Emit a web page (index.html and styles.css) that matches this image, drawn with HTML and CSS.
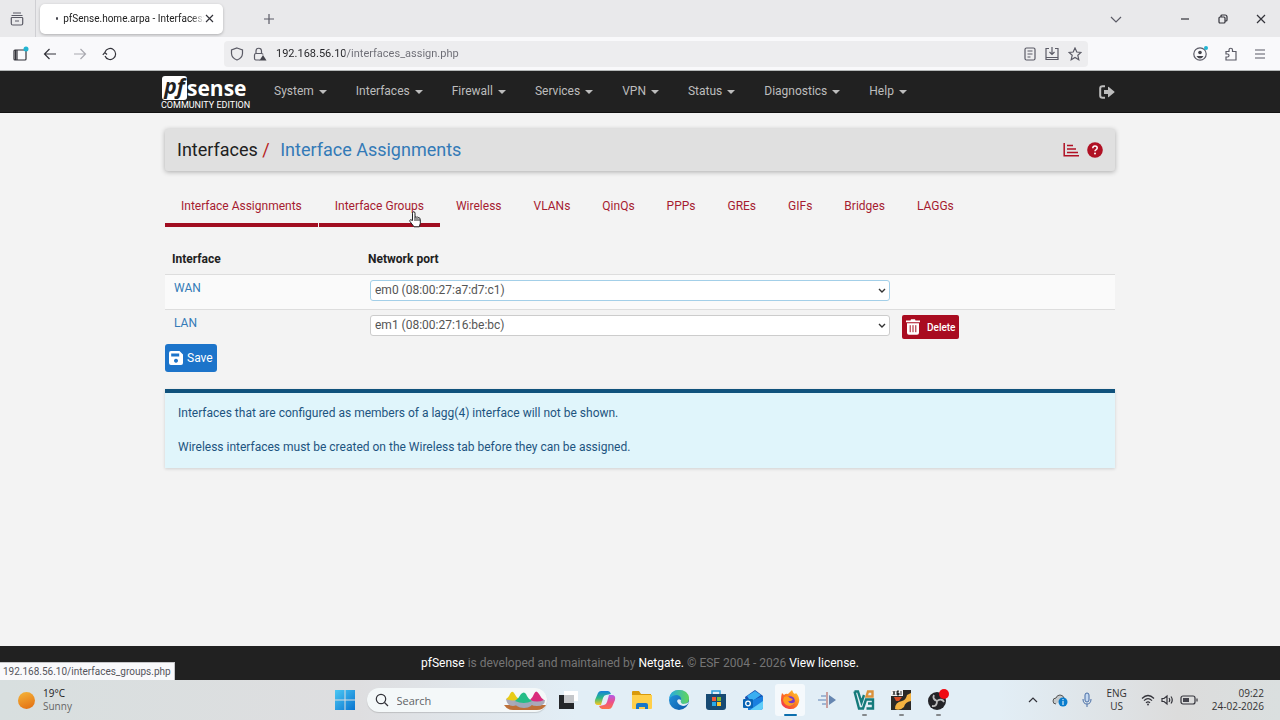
FILE: index.html
```html
<!DOCTYPE html>
<html lang="en">
<head>
  <meta charset="UTF-8" />
  <meta name="viewport" content="width=device-width, initial-scale=1.0"/>
  <title>pfSense.home.arpa - Interfaces: Interface Assignments</title>
  <link rel="stylesheet" href="styles.css">
</head>
<body>
  <!-- Browser window -->
  <div class="tab-strip">
    <button class="view-btn" aria-label="Recent browsing">
      <svg class="line" width="14" height="14" viewBox="0 0 14 14"><path d="M3 1h8M1.500 3.500h11M2 5.500h10q.7 0 .7.700v5.300q0 1.500-1.500 1.500H2.800q-1.500 0-1.500-1.500V6.200q0-.7.700-.7zM5 9h4"/></svg>
    </button>
    <div class="browser-tab">
      <span class="loading-dot"></span>
      <span class="tab-title">pfSense.home.arpa - Interfaces:</span>
      <button aria-label="Close tab"><svg class="line dark" width="9" height="9" viewBox="0 0 9 9"><path d="M1 1l7 7M8 1L1 8"/></svg></button>
    </div>
    <button class="new-tab" aria-label="New tab"><svg class="line" width="12" height="12" viewBox="0 0 12 12"><path d="M6 1v10M1 6h10"/></svg></button>
    <div class="window-controls">
      <button class="list-tabs" aria-label="List tabs"><svg class="line" width="12" height="12" viewBox="0 0 12 12"><path d="M1 4l5 5 5-5"/></svg></button>
      <button aria-label="Minimize"><svg class="line dark" width="10" height="10" viewBox="0 0 10 10"><path d="M1 5h8"/></svg></button>
      <button aria-label="Restore"><svg class="line dark" width="10" height="10" viewBox="0 0 10 10"><rect x="1" y="3" width="6" height="6" rx="1"/><path d="M3 3V2q0-1 1-1h3q2 0 2 2v3q0 1-1 1H7"/></svg></button>
      <button aria-label="Close"><svg class="line dark" width="10" height="10" viewBox="0 0 10 10"><path d="M1 1l8 8M9 1L1 9"/></svg></button>
    </div>
  </div>

  <div class="toolbar">
    <div class="nav-buttons">
      <button aria-label="Sidebar"><svg class="line dark" width="18" height="16" viewBox="0 0 18 16"><rect x="3" y="4" width="12" height="10" rx="1"/><path d="M6 4v10M4.500 4v10"/><circle class="notice" cx="15" cy="3" r="2.500"/></svg></button>
      <button aria-label="Back"><svg class="line dark" width="14" height="14" viewBox="0 0 14 14"><path d="M13 7H1.500M6.500 2l-5 5 5 5"/></svg></button>
      <button aria-label="Forward" disabled><svg class="line" width="14" height="14" viewBox="0 0 14 14"><path d="M1 7h11.500M7.500 2l5 5-5 5"/></svg></button>
      <button aria-label="Reload"><svg class="line dark" width="16" height="14" viewBox="0 0 16 14"><path d="M3 9a5.500 5.500 0 1 0 0-4M.8 7.800L2.800 5.500l2.200 2"/></svg></button>
    </div>
    <div class="url-bar">
      <svg class="line" width="14" height="14" viewBox="0 0 14 14"><path d="M7 1l5.500 2v3.500Q12.300 11 7 13 1.700 11 1.500 6.500V3z"/></svg>
      <svg class="line" width="14" height="14" viewBox="0 0 14 14"><path d="M7 13H3q-1.500 0-1.500-1.500V8Q1.500 6.500 3 6.500h5.500q1.500 0 1.500 1M3 6.500V4a2.700 2.700 0 0 1 5.500 0v2.500"/><path class="solid" d="M10 8l3.500 5.500h-7z"/></svg>
      <input type="text" class="address" aria-label="Address" value="192.168.56.10/interfaces_assign.php">
      <svg class="line" width="12" height="14" viewBox="0 0 12 14"><rect x="1" y="1" width="10" height="12" rx="1.500"/><path d="M3.500 4h5M3.500 7h5M3.500 10h3"/></svg>
      <svg class="line" width="14" height="14" viewBox="0 0 14 14"><path d="M4 1.500H1v11h12v-11h-3M1 10.500h12M7 0v7.500M4.500 5L7 7.500 9.500 5"/></svg>
      <svg class="line" width="14" height="14" viewBox="0 0 14 14"><path d="M7 1l1.800 4 4.200.4-3.200 2.900 1 4.400L7 10.500l-3.800 2.200 1-4.400L1 5.400 5.200 5z"/></svg>
    </div>
    <div class="tool-buttons">
      <button aria-label="Account"><svg class="line" width="16" height="18" viewBox="0 0 16 18"><circle cx="8" cy="9" r="6.200"/><circle class="solid" cx="8" cy="7.500" r="1.800"/><path class="solid" d="M4.500 11h7Q10 13.500 8 13.500 6 13.500 4.500 11z"/><circle class="notice" cx="14" cy="3" r="2"/></svg></button>
      <button aria-label="Extensions"><svg class="line" width="14" height="14" viewBox="0 0 14 14"><path d="M2 4.500h3V3a1.700 1.700 0 0 1 3.500 0v1.500H12V13H2v-3h1.500a1.500 1.500 0 0 0 0-3H2z"/></svg></button>
      <button aria-label="Menu"><svg class="line" width="12" height="12" viewBox="0 0 12 12"><path d="M1 2h10M1 6h10M1 10h10"/></svg></button>
    </div>
  </div>

  <!-- pfSense page -->
  <div class="page">
    <nav class="navbar">
      <div class="container navbar-inner">
        <a href="#" class="brand">
          <span class="logo"><span class="logo-pf">pf</span><span class="logo-sense">sense</span></span>
          <span class="edition">COMMUNITY EDITION</span>
        </a>
        <ul class="menu">
          <li><a href="#">System</a></li>
          <li><a href="#">Interfaces</a></li>
          <li><a href="#">Firewall</a></li>
          <li><a href="#">Services</a></li>
          <li><a href="#">VPN</a></li>
          <li><a href="#">Status</a></li>
          <li><a href="#">Diagnostics</a></li>
          <li><a href="#">Help</a></li>
        </ul>
        <a href="#" class="logout" aria-label="Logout"><svg width="16" height="14" viewBox="0 0 16 14"><path d="M6 1.200H3.500Q1.200 1.200 1.200 3.500v7q0 2.300 2.300 2.300H6" fill="none" stroke="currentColor" stroke-width="2"/><path d="M5 5h4V2.200q0-.9.800-.3l5.500 4.500q.6.600 0 1.200l-5.500 4.500q-.8.600-.8-.3V9H5z" fill="currentColor"/></svg></a>
      </div>
    </nav>

    <main class="container">
      <header class="page-header">
        <h1>Interfaces <span class="slash">/</span> <a href="#">Interface Assignments</a></h1>
        <div class="header-icons">
          <a href="#" aria-label="Related status"><svg width="16" height="14" viewBox="0 0 16 14" fill="none" stroke="currentColor"><path stroke-width="1.500" d="M1.200 0v12.800H16"/><path stroke-width="1.500" d="M4 2.500h6M4 6h9M4 9.500h11"/></svg></a>
          <a href="#" aria-label="Help"><svg width="16" height="16" viewBox="0 0 16 16"><circle cx="8" cy="8" r="7.800" fill="currentColor"/><path d="M5.800 6.300q0-2.200 2.200-2.200t2.200 1.900q0 1.100-1.100 1.700Q8 8.200 8 9.200" fill="none" stroke="#fff" stroke-width="1.500"/><circle cx="8" cy="11.600" r="1" fill="#fff"/></svg></a>
        </div>
      </header>

      <ul class="tabs">
        <li class="active"><a href="#">Interface Assignments</a></li>
        <li class="active"><a href="#">Interface Groups</a>
          <svg class="pointer" width="13" height="17" viewBox="0 0 13 17"><path d="M3.500 9.500V2.200q0-1.500 1.200-1.500T6 2.200v4q.7-.8 1.600 0 .9-.5 1.600.4 1.200-.5 1.600.7l.5 1.500v3.500l-1 3.500H5L1 10.500Q.3 9 1.600 8.700z" fill="#fff" stroke="#222"/><path d="M6 6v4M8 7v3M10 7.500V10" stroke="#222"/></svg>
        </li>
        <li><a href="#">Wireless</a></li>
        <li><a href="#">VLANs</a></li>
        <li><a href="#">QinQs</a></li>
        <li><a href="#">PPPs</a></li>
        <li><a href="#">GREs</a></li>
        <li><a href="#">GIFs</a></li>
        <li><a href="#">Bridges</a></li>
        <li><a href="#">LAGGs</a></li>
      </ul>

      <form>
        <table class="assignments">
          <thead>
            <tr><th class="col-name">Interface</th><th class="col-port">Network port</th><th></th></tr>
          </thead>
          <tbody>
            <tr>
              <td><a href="#">WAN</a></td>
              <td class="port">
                <div class="select-box focused">
                  <select aria-label="WAN network port"><option>em0 (08:00:27:a7:d7:c1)</option></select>
                  <svg class="chevron" width="8" height="6" viewBox="0 0 8 6"><path d="M1 1l3 3 3-3"/></svg>
                </div>
              </td>
              <td></td>
            </tr>
            <tr>
              <td><a href="#">LAN</a></td>
              <td class="port">
                <div class="select-box">
                  <select aria-label="LAN network port"><option>em1 (08:00:27:16:be:bc)</option></select>
                  <svg class="chevron" width="8" height="6" viewBox="0 0 8 6"><path d="M1 1l3 3 3-3"/></svg>
                </div>
              </td>
              <td>
                <button type="button" class="btn btn-danger">
                  <svg width="14" height="16" viewBox="0 0 14 16"><path d="M0 1.500h4.500L5 .3h4l.5 1.200H14v1.800H0zM1 4.300h12v9.500q0 1.900-1.900 1.900H2.900Q1 15.700 1 13.800z" fill="#fff"/><path d="M4.200 6.200v7M7 6.200v7M9.800 6.200v7" stroke="#a61322"/></svg>
                  Delete
                </button>
              </td>
            </tr>
          </tbody>
        </table>
        <button type="button" class="btn btn-save">
          <svg width="14" height="14" viewBox="0 0 14 14"><path fill="#fff" fill-rule="evenodd" d="M2 0h8.500L14 3.500V12q0 2-2 2H2q-2 0-2-2V2q0-2 2-2zM2.200 2.500v3h8v-3zM7 7.800a2 2 0 1 0 .01 0z"/></svg>
          Save
        </button>
      </form>

      <div class="alert">
        <p>Interfaces that are configured as members of a lagg(4) interface will not be shown.</p>
        <p>Wireless interfaces must be created on the Wireless tab before they can be assigned.</p>
      </div>
    </main>

    <footer class="footer">
      <a href="#">pfSense</a> is developed and maintained by <a href="#">Netgate.</a> © ESF 2004 - 2026 <a href="#">View license.</a>
    </footer>
    <div class="link-status">192.168.56.10/interfaces_groups.php</div>
  </div>

  <!-- Windows taskbar -->
  <div class="taskbar">
    <div class="weather">
      <span class="sun"></span>
      <div>19°C<br><span class="muted">Sunny</span></div>
    </div>

    <div class="apps">
      <svg width="22" height="22" viewBox="0 0 22 22">
        <defs><linearGradient id="win" x2="1" y2="1"><stop offset="0" stop-color="#4cc8f4"/><stop offset="1" stop-color="#0873cf"/></linearGradient></defs>
        <path fill="url(#win)" d="M1 1h9.500v9.500H1zM11.500 1H21v9.500h-9.500zM1 11.500h9.500V21H1zM11.500 11.500H21V21h-9.500z"/>
      </svg>
      <label class="search">
        <svg class="line dark" width="14" height="14" viewBox="0 0 14 14"><circle cx="6" cy="6" r="4.700"/><path d="M9.500 9.500L13 13"/></svg>
        <input type="text" placeholder="Search" aria-label="Search">
        <svg width="44" height="22" viewBox="0 0 44 22">
          <path fill="#bd7038" d="M1 16h42q-3 5-9 5H10q-6 0-9-5z"/>
          <path fill="#aaa9b8" d="M3 10h13q0 7-6 7t-7-7zM26 11h16q0 6-8 6t-8-6z"/>
          <path fill="#e8cc18" d="M3 10q3-2 4-5 2-4 4-1 2 4 5 6-6 3-13 0z"/>
          <path fill="#d92c7c" d="M27 11q3-3 4-6 2-5 5 0 2 4 5 6-7 3-14 0z"/>
          <path fill="#9fa8ba" d="M11 12h19q0 7-9 7t-10-7z"/>
          <path fill="#25bd87" d="M12 12q4-3 6-7 3-3 5 0 2 5 6 7-8 4-17 0z"/>
        </svg>
      </label>
      <svg width="22" height="22" viewBox="0 0 22 22"><path fill="#242629" d="M2 6h15v14H2z"/><path fill="#fff" d="M7 2h14v10h-4V6H7z"/><path fill="#c5c7ca" d="M7 6h10v8H7z"/></svg>
      <svg width="22" height="22" viewBox="0 0 22 22">
        <defs><linearGradient id="cpa" x2="0" y2="1"><stop offset="0" stop-color="#1580dc"/><stop offset=".5" stop-color="#2cbb85"/><stop offset="1" stop-color="#ffc61c"/></linearGradient><linearGradient id="cpb" x2="0" y2="1"><stop offset="0" stop-color="#b35be8"/><stop offset=".5" stop-color="#ec4f8b"/><stop offset="1" stop-color="#fb7446"/></linearGradient></defs>
        <path fill="url(#cpa)" d="M7 2h7q2 0 3 3l-5 1q-2 0-3 3l-2 7H4q-4 0-3-5l3-7q1-2 3-2z"/>
        <path fill="url(#cpb)" d="M15 20H8q-2 0-3-3l5-1q2 0 3-3l2-7h3q4 0 3 5l-3 7q-1 2-3 2z"/>
      </svg>
      <svg width="22" height="22" viewBox="0 0 22 22"><path fill="#d99a0c" d="M1 3q0-1 1-1h6l2 3h10v4H1z"/><path fill="#ffcf4a" d="M1 6h20v13q0 1-1 1H2q-1 0-1-1z"/><path fill="#1976c8" d="M5 20v-4q0-2 2-2h8q2 0 2 2v4h-3v-2H8v2z"/></svg>
      <svg width="22" height="22" viewBox="0 0 22 22">
        <defs><linearGradient id="edge" x2="1" y2="1"><stop offset="0" stop-color="#2499e0"/><stop offset="1" stop-color="#0b55a5"/></linearGradient><linearGradient id="edge2"><stop offset="0" stop-color="#24a9e6"/><stop offset="1" stop-color="#62d659"/></linearGradient></defs>
        <circle cx="11" cy="11" r="10" fill="url(#edge)"/>
        <path fill="url(#edge2)" d="M1 10Q2 1 11 1t10 8q0 6-6 6-4 0-2-3 1-5-4-6-5 0-8 4z"/>
        <path fill="#e2edf5" d="M13 11q-1 3 2 4 3 0 6-2-2 4-6 4-5-1-6-5 1-3 4-1z"/>
      </svg>
      <svg width="22" height="22" viewBox="0 0 22 22"><path fill="none" stroke="#2b9fda" stroke-width="1.500" d="M7 5V2h8v3"/><path fill="#174a73" d="M1 5h20v13q0 3-3 3H4q-3 0-3-3z"/><path fill="#f15b35" d="M7 8h4v4H7z"/><path fill="#80bd32" d="M12 8h4v4h-4z"/><path fill="#28a9e8" d="M7 13h4v4H7z"/><path fill="#fdc52c" d="M12 13h4v4h-4z"/></svg>
      <svg width="22" height="22" viewBox="0 0 22 22"><path fill="#174fae" d="M3 8l10-7 8 6v12H5z"/><path fill="#39aef1" d="M5 7l8-5 6 4-10 7z"/><path fill="#197fe0" d="M6 13l15-6v11q0 3-3 3H6z"/><path fill="#5fcdf9" d="M8 21l13-9v6q0 3-3 3z"/><rect x="1" y="10" width="10" height="9" rx="1" fill="#0964b5"/><circle cx="6" cy="14.500" r="2.300" fill="none" stroke="#fff" stroke-width="1.300"/></svg>
      <div class="app current">
        <svg width="22" height="22" viewBox="0 0 22 22">
          <defs><linearGradient id="fox" x1="1" x2="0" y2="1"><stop offset="0" stop-color="#ffdd35"/><stop offset=".5" stop-color="#ff761e"/><stop offset="1" stop-color="#ed2458"/></linearGradient></defs>
          <path fill="url(#fox)" d="M3 4l2 2q2-2 4-1 2-2 4-4 1 3 3 4l1-1q4 4 3 9-2 8-10 7-8-1-8-9 0-4 1-7z"/>
          <circle cx="11" cy="12" r="4.800" fill="#7738c8"/><path fill="#ff9d20" d="M5 8q4-2 6 1l3 1q-2 3-5 2 2 4 7 1-2 4-6 4-5-1-6-6z"/>
        </svg>
      </div>
      <svg width="22" height="22" viewBox="0 0 22 22"><path fill="#6686b1" d="M13 6l7 5-7 5z"/><path stroke="#9fb7d5" stroke-width="2" d="M5 7h5M2 11h8M6 15h4"/><path fill="#c8a0a0" d="M10 3h2v16h-2z"/></svg>
      <div class="app">
        <svg width="22" height="22" viewBox="0 0 22 22" fill="none" stroke-width="2.400"><path stroke="#157b7b" d="M1.500 2.500H5l3.500 11L11 6M1.500 2.500L6 19.500h4l3-9h7v4h-5M20 14.500v5h-6.500"/><path stroke="#db913a" d="M13.500 7.500L15 2.500h4.500v5z"/></svg>
      </div>
      <div class="app">
        <svg width="22" height="22" viewBox="0 0 22 22"><path fill="#2b2927" d="M1 1h20v20H1z"/><path fill="#f4b240" d="M5 20q0-7 7-8 4-1 5-6l4-2v8q-6 1-7 6-4 4-9 2z"/><path fill="#f3f3f3" d="M1 1h12v6H1z"/><path stroke="#333" d="M3 2l2 4M5 2L3 6M9 2H7v4h2V4H7M11 2v4"/><path fill="#d84b24" d="M4 8h8l-3 4H6z"/></svg>
      </div>
      <div class="app">
        <svg width="22" height="22" viewBox="0 0 22 22"><circle cx="10" cy="12" r="9" fill="#242428"/><path d="M10 12q-5-2-3-6M10 12q5-3 7 1M10 12q0 6-5 5" fill="none" stroke="#bbb" stroke-width="1.800"/><circle cx="17" cy="5" r="5" fill="#f00b12"/></svg>
      </div>
    </div>

    <div class="tray">
      <svg class="line dark" width="10" height="10" viewBox="0 0 10 10"><path d="M1 7l4-4 4 4"/></svg>
      <svg width="16" height="14" viewBox="0 0 16 14"><path fill="#c4c8ca" stroke="#555" d="M4 11Q1 11 1 8t3-3q1-3 4-3t4 3"/><circle cx="11" cy="9" r="4.500" fill="#087ccd"/><path stroke="#fff" d="M11 6v1.200M11 8v4"/></svg>
      <svg width="10" height="16" viewBox="0 0 10 16" fill="none" stroke="#466da6"><rect x="3" y="1" width="4" height="9" rx="2" fill="#c4d8f0"/><path d="M1 7q0 5 4 5t4-5M5 12v3"/></svg>
      <div class="lang">ENG<br>US</div>
      <div class="status-icons">
        <svg class="line dark" width="14" height="12" viewBox="0 0 14 12"><path d="M1 4.500q6-6 12 0M3 6.700q4-4 8 0M5 8.800q2-2 4 0"/><circle class="solid" cx="7" cy="10.500" r="1"/></svg>
        <svg class="line dark" width="13" height="12" viewBox="0 0 13 12"><path d="M1 4.500h2L6 2v8L3 7.500H1zM8 4q1.500 2 0 4M10 2.500q2.500 3.500 0 7"/></svg>
        <svg class="line dark" width="18" height="10" viewBox="0 0 18 10"><rect x="1" y="1" width="14" height="8" rx="2"/><path class="solid" d="M3 3h6v4H3z"/><path d="M17 3.500v3"/></svg>
      </div>
      <div class="clock">09:22<br>24-02-2026</div>
    </div>
  </div>
</body>
</html>
```
FILE: styles.css
```css
* {
  box-sizing: border-box;
}

body {
  margin: 0;
  min-height: 100vh;
  display: flex;
  flex-direction: column;
  font-family: Roboto, sans-serif;
  font-size: 12px;
  line-height: 17px;
  color: #212121;
  background: #f3f3f3;
}

a {
  color: #337ab7;
  text-decoration: none;
}

button, input, select {
  font: inherit;
  color: inherit;
}

button {
  display: inline-flex;
  align-items: center;
  border: none;
  background: none;
  padding: 0;
  cursor: pointer;
}

ul {
  list-style: none;
  margin: 0;
  padding: 0;
}

svg {
  display: block;
  flex-shrink: 0;
}

.line {
  fill: none;
  stroke: #5b5b66;
  stroke-width: 1.2;
}

.line.dark {
  stroke: #33333a;
}

.line .solid {
  fill: #44444c;
  stroke: none;
}

.line .notice {
  fill: #22b5d2;
  stroke: none;
}

/* browser */
.tab-strip {
  display: flex;
  align-items: center;
  height: 37px;
  background: #e9e9eb;
  font-size: 10px;
}

.view-btn {
  width: 36px;
  height: 37px;
  padding-right: 2px;
  justify-content: center;
  border-right: 1px solid #cfcfd3;
}

.browser-tab {
  display: flex;
  align-items: center;
  width: 183px;
  height: 30px;
  margin-left: 4px;
  padding: 0 9px 0 16px;
  border-radius: 5px;
  background: #fff;
  box-shadow: 0 1px 3px rgba(0, 0, 0, 0.25);
}

.loading-dot {
  width: 3px;
  height: 3px;
  margin-right: 5px;
  border-radius: 50%;
  background: #44444c;
}

.tab-title {
  flex: 1;
  white-space: nowrap;
  mask-image: linear-gradient(to left, transparent, #000 14px);
}

.new-tab {
  margin-left: 40px;
}

.window-controls {
  display: flex;
  gap: 28px;
  margin-left: auto;
  padding-right: 14px;
}

.list-tabs {
  margin-right: 30px;
}

.toolbar {
  display: flex;
  align-items: center;
  height: 34px;
  background: #f9f9fb;
  border-bottom: 1px solid #b5b8b8;
}

.nav-buttons {
  display: flex;
  width: 224px;
  padding-left: 5px;
}

.nav-buttons button {
  width: 30px;
  justify-content: center;
}

.nav-buttons button:disabled {
  opacity: 0.5;
}

.url-bar {
  flex: 1;
  display: flex;
  align-items: center;
  gap: 9px;
  height: 26px;
  padding: 0 6px;
  border-radius: 4px;
  background: #ededef;
}

.address {
  flex: 1;
  min-width: 0;
  border: none;
  padding: 0;
  outline: none;
  font-size: 11px;
  /* host is darker than the path */
  color: transparent;
  background: linear-gradient(to right, #222226 69px, #6c6c74 69px);
  background-clip: text;
}

.tool-buttons {
  display: flex;
  justify-content: flex-end;
  align-items: center;
  gap: 16px;
  width: 192px;
  padding-right: 14px;
}

/* page */
.page {
  position: relative;
  flex: 1;
  display: flex;
  flex-direction: column;
}

.container {
  width: 100%;
  max-width: 950px;
  margin: 0 auto;
}

.navbar {
  background: #212121;
  border-bottom: 1px solid #111;
}

.navbar-inner {
  display: flex;
  align-items: center;
  height: 41px;
}

.brand {
  display: flex;
  flex-direction: column;
  width: 88px;
  margin-left: -4px;
  padding-top: 3px;
  color: #fff;
}

.logo {
  display: flex;
  align-items: center;
  height: 24px;
  font-family: "Open Sans", sans-serif;
  font-size: 21px;
  font-weight: 700;
}

.logo-pf {
  width: 25px;
  height: 24px;
  margin-left: 1px;
  border-radius: 3px;
  background: #fff;
  color: #212121;
  font-style: italic;
  line-height: 20px;
  text-align: center;
}

.logo-sense {
  line-height: 20px;
}

.edition {
  font-size: 9px;
  line-height: 10px;
  white-space: nowrap;
}

.menu {
  display: flex;
  gap: 29px;
  margin-left: 25px;
}

.menu a {
  display: flex;
  align-items: center;
  color: #bdbdbd;
}

.menu a::after {
  content: "";
  margin-left: 5px;
  border: 4px solid transparent;
  border-top-color: #bdbdbd;
  border-bottom: none;
}

.logout {
  margin-left: auto;
  color: #bdbdbd;
}

.page-header {
  display: flex;
  align-items: center;
  justify-content: space-between;
  height: 42px;
  margin: 16px 0 19px;
  padding: 0 12px;
  border-radius: 3px;
  background: #e0e0e0;
  box-shadow: 0 1px 5px rgba(0, 0, 0, 0.3);
}

h1 {
  margin: 0;
  font-size: 18px;
  font-weight: 400;
  line-height: 24px;
}

h1 a {
  margin-left: 6px;
}

.slash {
  color: #b71c1c;
}

.header-icons {
  display: flex;
  align-items: center;
  gap: 8px;
}

.header-icons a {
  color: #b01124;
}

.tabs {
  display: flex;
}

.tabs li {
  position: relative;
  border-bottom: 4px solid transparent;
}

.tabs li.active {
  border-bottom-color: #a00d20;
}

.tabs .active + .active {
  margin-left: 1px;
}

.tabs a {
  display: block;
  padding: 8px 16px;
  color: #a61b30;
}

.pointer {
  position: absolute;
  top: 21px;
  right: 18px;
}

.assignments {
  width: 100%;
  margin-top: 18px;
  border-collapse: separate;
  border-spacing: 0;
}

.assignments th {
  padding: 6px 7px;
  text-align: left;
  font-weight: 700;
  border-bottom: 1px solid #ddd;
}

.col-name {
  width: 196px;
}

.col-port {
  width: 56%;
}

.assignments td {
  height: 34px;
  padding: 5px 9px;
  vertical-align: top;
}

.assignments tbody tr:first-child td {
  height: 35px;
  background: #fafafa;
  border-bottom: 1px solid #ddd;
}

.assignments .port {
  padding-right: 3px;
}

.select-box {
  position: relative;
}

.select-box select {
  display: block;
  appearance: none;
  width: 100%;
  height: 21px;
  padding: 0 4px;
  border: 1px solid #ccc;
  border-radius: 3px;
  background: #fff;
  color: #555;
  outline: none;
}

.select-box.focused select {
  border-color: #a3cfe8;
}

.chevron {
  position: absolute;
  top: 8px;
  right: 4px;
  fill: none;
  stroke: #333;
  stroke-width: 1.4;
  pointer-events: none;
}

.btn {
  display: flex;
  border-radius: 3px;
  color: #fff;
}

.btn-danger {
  gap: 7px;
  height: 24px;
  padding: 0 4px;
  border-radius: 2px;
  background: #a90c20;
  font-size: 10px;
  font-weight: 500;
}

.btn-save {
  gap: 4px;
  height: 28px;
  padding: 0 4px;
  background: #1c74ca;
}

.alert {
  margin-top: 17px;
  padding: 12px 13px;
  border-top: 4px solid #10527c;
  background: #e0f5fb;
  color: #1d5480;
  box-shadow: 0 1px 3px rgba(0, 0, 0, 0.15);
}

.alert p {
  margin: 0;
}

.alert p + p {
  margin-top: 17px;
}

.footer {
  margin-top: auto;
  padding: 9px 8px 8px;
  background: #212121;
  color: #757575;
  text-align: center;
}

.footer a {
  color: #fff;
}

/* hovered link address, bottom left of the page */
.link-status {
  position: absolute;
  left: 0;
  bottom: 0;
  padding: 0 3px;
  border-top: 1px solid #c5c5c8;
  border-right: 1px solid #c5c5c8;
  background: #f9f9fb;
  color: #55555c;
  font-size: 10px;
}

/* taskbar */
.taskbar {
  display: grid;
  grid-template-columns: 1fr auto 1fr;
  align-items: center;
  height: 40px;
  background: linear-gradient(to right, #d8dfdf, #dedee0 28%, #e2eef6 45%, #e2eef6 78%, #dcdcdc 92%, #dadfdf);
  font-family: "Open Sans", sans-serif;
  font-size: 10px;
  line-height: 13px;
}

.weather {
  display: flex;
  align-items: center;
  gap: 8px;
  padding-left: 18px;
}

.sun {
  width: 17px;
  height: 17px;
  border-radius: 50%;
  background: linear-gradient(160deg, #f5b63a, #e26b10);
}

.muted {
  color: #666;
}

.apps {
  display: flex;
  align-items: center;
  gap: 15px;
  padding-left: 2px;
}

.search {
  display: flex;
  align-items: center;
  gap: 8px;
  width: 180px;
  height: 24px;
  margin: 0 -5px 0 -4px;
  padding: 0 0 0 8px;
  border-radius: 12px;
  background: #f4f8f9;
  box-shadow: 0 1px 1px rgba(0, 0, 0, 0.15);
}

.search input {
  flex: 1;
  min-width: 0;
  border: none;
  padding: 0;
  outline: none;
  background: none;
  font-size: 11px;
}

.search input::placeholder {
  color: #5f6366;
}

.app {
  position: relative;
}

.app::after {
  content: "";
  position: absolute;
  left: 9px;
  bottom: -5px;
  width: 5px;
  height: 2px;
  border-radius: 1px;
  background: #85898c;
}

.app.current {
  margin: 0 -4px;
  padding: 5px 4px;
  border-radius: 3px;
  background: #f5f9fc;
}

.app.current::after {
  left: 9px;
  bottom: 0;
  width: 13px;
  background: #0d6fae;
}

.tray {
  display: flex;
  align-items: center;
  justify-content: flex-end;
  gap: 14px;
  padding-right: 16px;
  color: #333;
}

.lang {
  text-align: center;
}

.status-icons {
  display: flex;
  align-items: center;
  gap: 6px;
}

.clock {
  text-align: right;
}
```
